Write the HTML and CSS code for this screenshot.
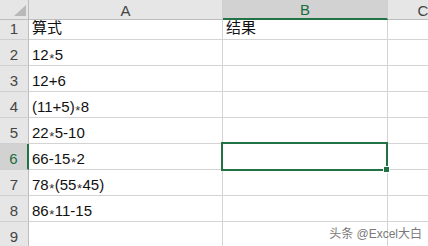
FILE: index.html
```html
<!DOCTYPE html>
<html lang="zh">
<head>
<meta charset="utf-8">
<link rel="stylesheet" href="styles.css">
</head>
<body>
<div class="sheet">
  <div class="grid">
    <div class="hd corner"><svg class="tri" width="13" height="12" viewBox="0 0 13 12"><polygon points="12,0 12,11 0,11" fill="#b9b9b9"/></svg></div>
    <div class="hd col">A</div>
    <div class="hd col sel-col">B</div>
    <div class="hd col last">C</div>

    <div class="hd rowh r1">1</div><div class="c r1"><span>算式</span></div><div class="c r1"><span>结果</span></div><div class="c r1 last"></div>
    <div class="hd rowh">2</div><div class="c"><span>12<span class="op">*</span>5</span></div><div class="c"></div><div class="c last"></div>
    <div class="hd rowh">3</div><div class="c"><span>12+6</span></div><div class="c"></div><div class="c last"></div>
    <div class="hd rowh">4</div><div class="c"><span>(11+5)<span class="op">*</span>8</span></div><div class="c"></div><div class="c last"></div>
    <div class="hd rowh">5</div><div class="c"><span>22<span class="op">*</span>5-10</span></div><div class="c"></div><div class="c last"></div>
    <div class="hd rowh sel-row">6</div><div class="c"><span>66-15<span class="op">*</span>2</span></div><div class="c"></div><div class="c last"></div>
    <div class="hd rowh">7</div><div class="c"><span>78<span class="op">*</span>(55<span class="op">*</span>45)</span></div><div class="c"></div><div class="c last"></div>
    <div class="hd rowh">8</div><div class="c"><span>86<span class="op">*</span>11-15</span></div><div class="c"></div><div class="c last"></div>
    <div class="hd rowh">9</div><div class="c"></div><div class="c"></div><div class="c last"></div>
  </div>
  <div class="selection"><span class="handle"></span></div>
  <div class="watermark">头条 @Excel大白</div>
</div>
</body>
</html>
```
FILE: styles.css
```css
html, body {
  margin: 0;
  padding: 0;
  background: #ffffff;
}
.sheet {
  position: relative;
  width: 428px;
  height: 246px;
  overflow: hidden;
  font-family: "Liberation Sans", "Noto Sans CJK SC", sans-serif;
}
.grid {
  display: grid;
  grid-template-columns: 29px 194px 165px 70px;
  grid-template-rows: 20px 20px repeat(8, 26px);
}
.hd {
  background: #e6e6e6;
  color: #444444;
  font-size: 15px;
  display: flex;
  align-items: center;
  justify-content: center;
  box-sizing: border-box;
}
.col {
  border-right: 1px solid #d0d0d0;
  border-bottom: 1px solid #bdbdbd;
  padding-top: 1px;
}
.corner {
  border-right: 1px solid #bdbdbd;
  border-bottom: 1px solid #bdbdbd;
  position: relative;
}
.tri {
  position: absolute;
  left: 14px;
  top: 5px;
}
.rowh {
  border-right: 1px solid #bdbdbd;
  border-bottom: 1px solid #d0d0d0;
  align-items: flex-end;
  padding-bottom: 2px;
}
.sel-col {
  background: #d2d2d2;
  color: #1d6b40;
  border-bottom: 2px solid #217346;
}
.sel-row {
  background: #d2d2d2;
  color: #1d6b40;
  border-right: 2px solid #217346;
}
.c {
  box-sizing: border-box;
  border-right: 1px solid #d4d4d4;
  border-bottom: 1px solid #d4d4d4;
  font-size: 15px;
  color: #111111;
  padding: 0 0 2px 3px;
  display: flex;
  align-items: flex-end;
  white-space: nowrap;
}
.op {
  font-size: 13px;
  line-height: 0;
  vertical-align: -3px;
  margin: 0 0.5px;
  color: #333333;
}
.last {
  border-right: none;
}
.selection {
  position: absolute;
  left: 221px;
  top: 142px;
  width: 167px;
  height: 29px;
  box-sizing: border-box;
  border: 2px solid #217346;
}
.handle {
  position: absolute;
  right: -4px;
  bottom: -4px;
  width: 5px;
  height: 5px;
  background: #217346;
  border: 1px solid #ffffff;
}
.watermark {
  position: absolute;
  right: 6px;
  bottom: 5px;
  font-size: 12px;
  color: #7a7a7a;
  font-family: "Liberation Sans", "Noto Sans CJK SC", sans-serif;
}
```
